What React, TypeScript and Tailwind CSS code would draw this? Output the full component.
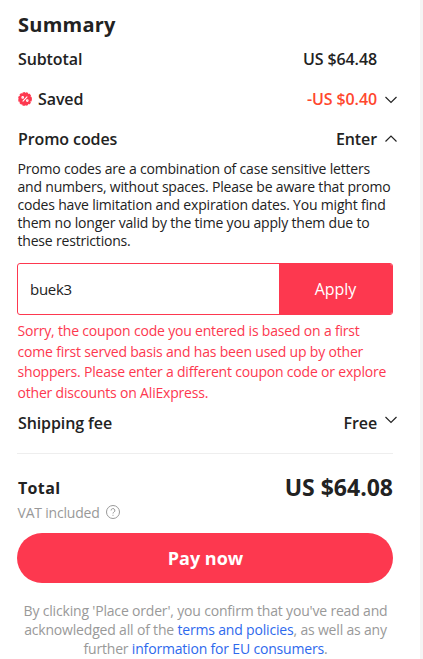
import type { ReactNode } from 'react';

interface RowProps {
  label: ReactNode;
  value: string;
  className?: string;
  valueClassName?: string;
  chevron?: 'up' | 'down';
  chevronClassName?: string;
}

function Chevron({ direction, className = '' }: { direction: 'up' | 'down'; className?: string }) {
  return (
    <svg className={`w-3 h-2 ${className}`} viewBox="0 0 12 8" fill="none" stroke="#222222" strokeWidth="1.15">
      <path d={direction === 'down' ? 'M0.5 1L6 6.5L11.5 1' : 'M0.5 6.5L6 1L11.5 6.5'} />
    </svg>
  );
}

function SavedIcon() {
  return (
    <svg className="w-[14px] h-[14px] mr-[6px]" viewBox="0 0 14 14" fill="none">
      <circle cx="7" cy="7" r="6.2" fill="#fd384f" stroke="#fd384f" strokeWidth="1.4" strokeDasharray="2.4 0.85" />
      <g stroke="white" strokeWidth="1.1" strokeLinecap="round">
        <path d="M9 4.8L5 9.2" />
        <circle cx="4.7" cy="5.4" r="0.8" />
        <circle cx="9.3" cy="8.6" r="0.8" />
      </g>
    </svg>
  );
}

function SummaryRow({ label, value, className = '', valueClassName = '', chevron, chevronClassName }: RowProps) {
  return (
    <div className={`flex items-center text-[16px] leading-5 font-semibold tracking-[-0.1px] ${className}`}>
      <div className="flex items-center">{label}</div>
      <span className={`ml-auto ${valueClassName}`}>{value}</span>
      <span className="w-5 flex justify-end">
        {chevron && <Chevron direction={chevron} className={chevronClassName} />}
      </span>
    </div>
  );
}

export default function App() {
  return (
    <div className="flex h-[659px] overflow-hidden bg-white text-[#222222] font-['Open_Sans',sans-serif]">
      <main className="w-[420px] shrink-0 pl-[17px] pr-[27px]">
        <h1 className="pl-px pt-[11px] text-[20px] leading-7 font-bold tracking-[0.25px]">Summary</h1>
        <div className="-mr-1">
          <SummaryRow className="pl-px mt-[10px]" label="Subtotal" value="US $64.48" />
          <SummaryRow
            className="pl-px mt-5"
            label={<><SavedIcon />Saved</>}
            value="-US $0.40"
            valueClassName="text-[#ff472e]"
            chevron="down"
            chevronClassName="mt-[2px]"
          />
          <SummaryRow className="pl-px mt-5" label="Promo codes" value="Enter" chevron="up" />
        </div>
        <p className="mt-[11px] pl-[0.5px] text-[14px] leading-[18px] tracking-[-0.19px] whitespace-nowrap">
          Promo codes are a combination of case sensitive letters<br />
          and numbers, without spaces. Please be aware that promo<br />
          codes have limitation and expiration dates. You might find<br />
          them no longer valid by the time you apply them due to<br />
          these restrictions.
        </p>
        <div className="mt-[13px] flex h-[52px] rounded-[3px] border border-[#fd384f] overflow-hidden">
          <input
            className="min-w-0 flex-1 px-3 text-[15px] tracking-[-0.3px] outline-none"
            defaultValue="buek3"
            aria-label="Promo code"
          />
          <button className="w-[113px] bg-[#fd384f] text-white text-[16px]">Apply</button>
        </div>
        <p className="mt-[6px] pl-[0.5px] text-[14px] leading-[20.5px] tracking-[-0.19px] text-[#fd384f] whitespace-nowrap">
          Sorry, the coupon code you entered is based on a first<br />
          come first served basis and has been used up by other<br />
          shoppers. Please enter a different coupon code or explore<br />
          other discounts on AliExpress.
        </p>
        <SummaryRow
          className="-mr-1 pl-px mt-[10px]"
          label="Shipping fee"
          value="Free"
          chevron="down"
          chevronClassName="-mt-1.5"
        />
        <div className="mt-5 border-t border-[#eeeeee]" />
        <div className="mt-[17px] flex h-8 items-center justify-between font-bold">
          <span className="pl-px pt-0.5 text-[16px] tracking-[0.35px]">Total</span>
          <span className="text-[23px]">US $64.08</span>
        </div>
        <div className="flex items-center gap-[6px] pl-[0.5px] text-[14px] leading-5 tracking-[-0.2px] text-[#999999]">
          VAT included
          <svg className="w-[14px] h-[14px] -mt-0.5" viewBox="0 0 14 14" fill="none" stroke="currentColor">
            <circle cx="7" cy="7" r="6.5" />
            <path d="M5.1 5.5a1.9 1.9 0 1 1 2.8 1.65C7.2 7.5 7 7.8 7 8.5M7 9.8v1" />
          </svg>
        </div>
        <button className="mt-[10px] h-[50px] w-full rounded-full bg-[#fd384f] pl-px text-[18px] font-bold text-white">
          Pay now
        </button>
        <p className="mt-[18px] pl-px text-center text-[14px] leading-[19px] tracking-[-0.18px] text-[#999999] whitespace-nowrap">
          By clicking 'Place order', you confirm that you've read and<br />
          acknowledged all of the <a className="text-[#2e69ed]">terms and policies</a>, as well as any<br />
          further <a className="text-[#2e69ed]">information for EU consumers</a>.
        </p>
      </main>
      <div className="flex-1 bg-[#f5f5f5]" />
    </div>
  );
}
